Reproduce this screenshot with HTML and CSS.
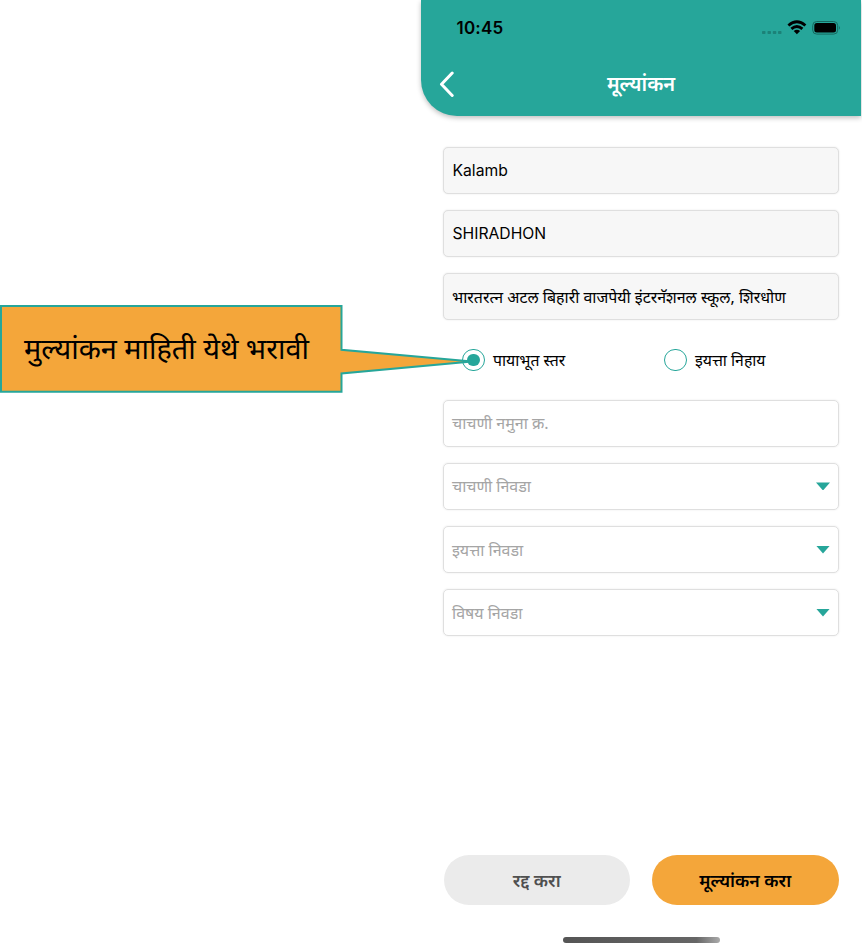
FILE: index.html
```html
<!DOCTYPE html>
<html lang="mr">
<head>
<meta charset="utf-8">
<title>मूल्यांकन</title>
<link rel="stylesheet" href="styles.css">
</head>
<body>
<main class="page">
  <section class="phone">
    <header class="header">
      <div class="status">
        <span class="time">10:45</span>
        <svg class="status-icons" width="80" height="20" viewBox="0 0 80 20">
          <g fill="#1c8278"><rect x="2" y="13" width="3.500" height="3" rx=".8"/><rect x="7.500" y="13" width="3.500" height="3" rx=".8"/><rect x="12.800" y="13" width="3.500" height="3" rx=".8"/><rect x="18" y="13" width="3.500" height="3" rx=".8"/></g>
          <g fill="none" stroke="#000" stroke-width="2.800"><path d="M28.400 7.500Q36.900 -.1 45.400 7.500"/><path d="M31.400 10.900Q36.900 6 42.400 10.900"/></g>
          <path d="M33.700 13Q36.900 10.300 40.100 13L36.900 16.200Z"/>
          <rect x="52.700" y="3.500" width="25" height="12.600" rx="4" fill="none" stroke="#16685f"/>
          <rect x="54.300" y="5.100" width="21.700" height="9.400" rx="2.500"/>
          <path d="M79 7.800Q80.500 9.800 79 11.800Z" fill="#16685f"/>
        </svg>
      </div>
      <div class="nav">
        <svg class="back" width="16" height="26" viewBox="0 0 16 26"><path d="M13.200 2L2.500 13.300L13.200 24.500" fill="none" stroke="#fff" stroke-width="3" stroke-linecap="round" stroke-linejoin="round"/></svg>
        <h1 class="title">मूल्यांकन</h1>
      </div>
    </header>
    <div class="form">
      <div class="field filled latin">Kalamb</div>
      <div class="field filled latin">SHIRADHON</div>
      <div class="field filled school">भारतरत्न अटल बिहारी वाजपेयी इंटरनॅशनल स्कूल, शिरधोण</div>
      <div class="radios">
        <div class="option"><span class="radio checked"></span><span>पायाभूत स्तर</span></div>
        <div class="option"><span class="radio"></span><span>इयत्ता निहाय</span></div>
      </div>
      <div class="field hint">चाचणी नमुना क्र.</div>
      <div class="field hint"><span>चाचणी निवडा</span><i class="caret"></i></div>
      <div class="field hint"><span>इयत्ता निवडा</span><i class="caret"></i></div>
      <div class="field hint"><span>विषय निवडा</span><i class="caret"></i></div>
    </div>
    <footer class="footer">
      <div class="actions">
        <div class="button cancel">रद्द करा</div>
        <div class="button submit">मूल्यांकन करा</div>
      </div>
      <div class="home"></div>
    </footer>
  </section>
  <aside class="callout">
    <svg class="callout-shape" width="480" height="90" viewBox="0 0 480 90"><path d="M1 2H341.500V45.800L472 57.500L341.500 69.500V87.700H1Z" fill="#f4a63a" stroke="#26a69a" stroke-width="2"/></svg>
    <p class="callout-text">मुल्यांकन माहिती येथे भरावी</p>
  </aside>
</main>
</body>
</html>
```
FILE: styles.css
```css
* { box-sizing: border-box; }
body { margin: 0; background: #fff; font-family: "Noto Sans", "Noto Sans Devanagari", sans-serif; color: #000; }
.page { position: relative; width: 862px; height: 952px; overflow: hidden; display: flex; justify-content: flex-end; padding-right: 1px; }
.phone { width: 440px; height: 952px; display: flex; flex-direction: column; }
.header { height: 116px; flex: none; background: #26a69a; border-bottom-left-radius: 36px; box-shadow: 0 2px 5px rgba(0,0,0,.25); }
.status { height: 56px; display: flex; justify-content: space-between; align-items: center; padding: 0 21px 0 35.500px; }
.time { font: 600 17px/20px Inter, sans-serif; letter-spacing: .2px; }
.status-icons { overflow: visible; }
.nav { height: 56px; display: grid; grid-template-columns: 40px 1fr 40px; align-items: center; }
.back { margin-left: 18px; }
.title { margin: 0; text-align: center; color: #fff; font-size: 20px; line-height: 30px; font-weight: 600; }
.form { padding: 31px 22px 0; display: flex; flex-direction: column; gap: 16px; }
.field { height: 47.100px; border: 1px solid #dfdfdf; border-radius: 5px; padding: 0 8px; display: flex; align-items: center; justify-content: space-between; font-size: 16px; line-height: 24px; box-shadow: 0 0 2px rgba(0,0,0,.1); white-space: nowrap; }
.filled { background: #f7f7f7; }
.latin { font-family: Inter, sans-serif; font-size: 15.700px; padding: 1px 8.500px 0; }
.school { font-size: 15.950px; }
.hint { color: #a5a5a5; }
.caret { width: 14px; height: 8px; background: #26a69a; clip-path: polygon(0 0, 100% 0, 50% 100%); }
.radios { height: 47.500px; display: grid; grid-template-columns: 202px 1fr; padding-left: 19px; }
.option { display: flex; align-items: center; gap: 8.500px; font-size: 15.800px; }
.radio { width: 22.500px; height: 22.500px; border: 1.500px solid #26a69a; border-radius: 50%; display: grid; place-items: center; }
.checked::after { content: ""; width: 12.500px; height: 12.500px; border-radius: 50%; background: #26a69a; }
.footer { margin-top: auto; }
.actions { display: grid; grid-template-columns: 1fr 1fr; gap: 22px; padding: 0 22.500px; }
.button { height: 50px; border-radius: 25px; display: flex; align-items: center; justify-content: center; font-size: 17.700px; font-weight: 600; }
.cancel { background: #ebebeb; color: #505050; }
.submit { background: #f4a63a; }
.home { width: 157px; height: 6px; margin: 32px 0 9px 142px; border-radius: 3px; background: linear-gradient(90deg, #555, #666 85%, #aaa); }
.callout { position: absolute; left: 0; top: 304px; width: 480px; height: 90px; }
.callout-shape { display: block; }
.callout-text { position: absolute; left: 24px; top: 21px; margin: 0; font-size: 28.850px; line-height: 46px; white-space: nowrap; }
```
